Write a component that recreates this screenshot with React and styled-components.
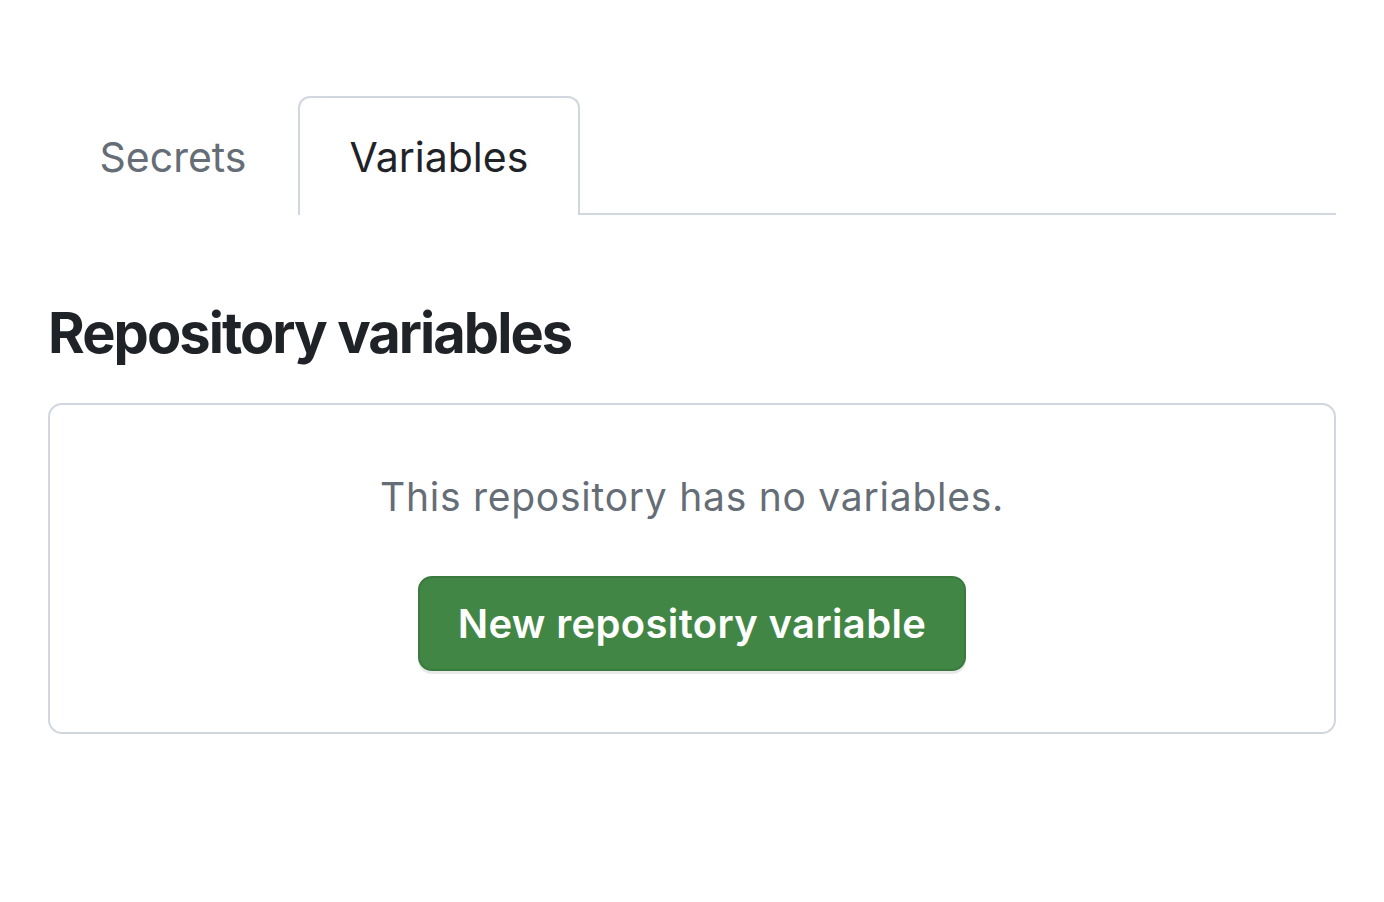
import styled, { createGlobalStyle } from "styled-components";

const GlobalStyle = createGlobalStyle`
  body {
    margin: 0;
    background: #ffffff;
    font-family: Inter, "Noto Sans", sans-serif;
    color: #1f2328;
  }
`;

const Page = styled.div`
  padding: 96px 48px 0;
`;

const TabNav = styled.nav`
  display: flex;
  border-bottom: 2px solid #d0d7de;
`;

const Tab = styled.a`
  display: flex;
  align-items: center;
  box-sizing: border-box;
  height: 119px;
  margin-bottom: -2px;
  padding: 0 49.5px;
  font-size: 41px;
  text-decoration: none;
  cursor: pointer;
  color: ${(p) => (p.$active ? "#1f2328" : "#656d76")};
  background: #ffffff;
  border: 2px solid ${(p) => (p.$active ? "#d0d7de" : "transparent")};
  border-bottom: 0;
  border-radius: 12px 12px 0 0;
`;

const Heading = styled.h2`
  margin: 83px 0 35px;
  font-size: 56px;
  line-height: 70px;
  font-weight: 700;
  letter-spacing: -1.95px;
  color: #1f2328;
`;

const Blankslate = styled.div`
  border: 2px solid #d0d7de;
  border-radius: 14px;
  padding: 63px 32px 61px;
  display: flex;
  flex-direction: column;
  align-items: center;
  gap: 51px;
`;

const Message = styled.p`
  margin: 0;
  font-size: 39px;
  line-height: 57px;
  letter-spacing: 0.75px;
  color: #656d76;
`;

const PrimaryButton = styled.button`
  display: flex;
  align-items: center;
  justify-content: center;
  height: 95px;
  padding: 0 38px;
  font-family: inherit;
  font-size: 40px;
  font-weight: 600;
  letter-spacing: 0.35px;
  color: #ffffff;
  background: #428646;
  border: 2px solid #3a7a3f;
  border-radius: 14px;
  box-shadow: 0 3px 0 rgba(31, 35, 40, 0.1);
  cursor: pointer;
`;

const tabs = [
  { label: "Secrets", active: false },
  { label: "Variables", active: true },
];

const App = () => {
  return (
    <>
      <GlobalStyle />
      <Page>
        <TabNav>
          {tabs.map((tab) => (
            <Tab key={tab.label} $active={tab.active}>
              {tab.label}
            </Tab>
          ))}
        </TabNav>
        <Heading>Repository variables</Heading>
        <Blankslate>
          <Message>This repository has no variables.</Message>
          <PrimaryButton>New repository variable</PrimaryButton>
        </Blankslate>
      </Page>
    </>
  );
};

export default App;
